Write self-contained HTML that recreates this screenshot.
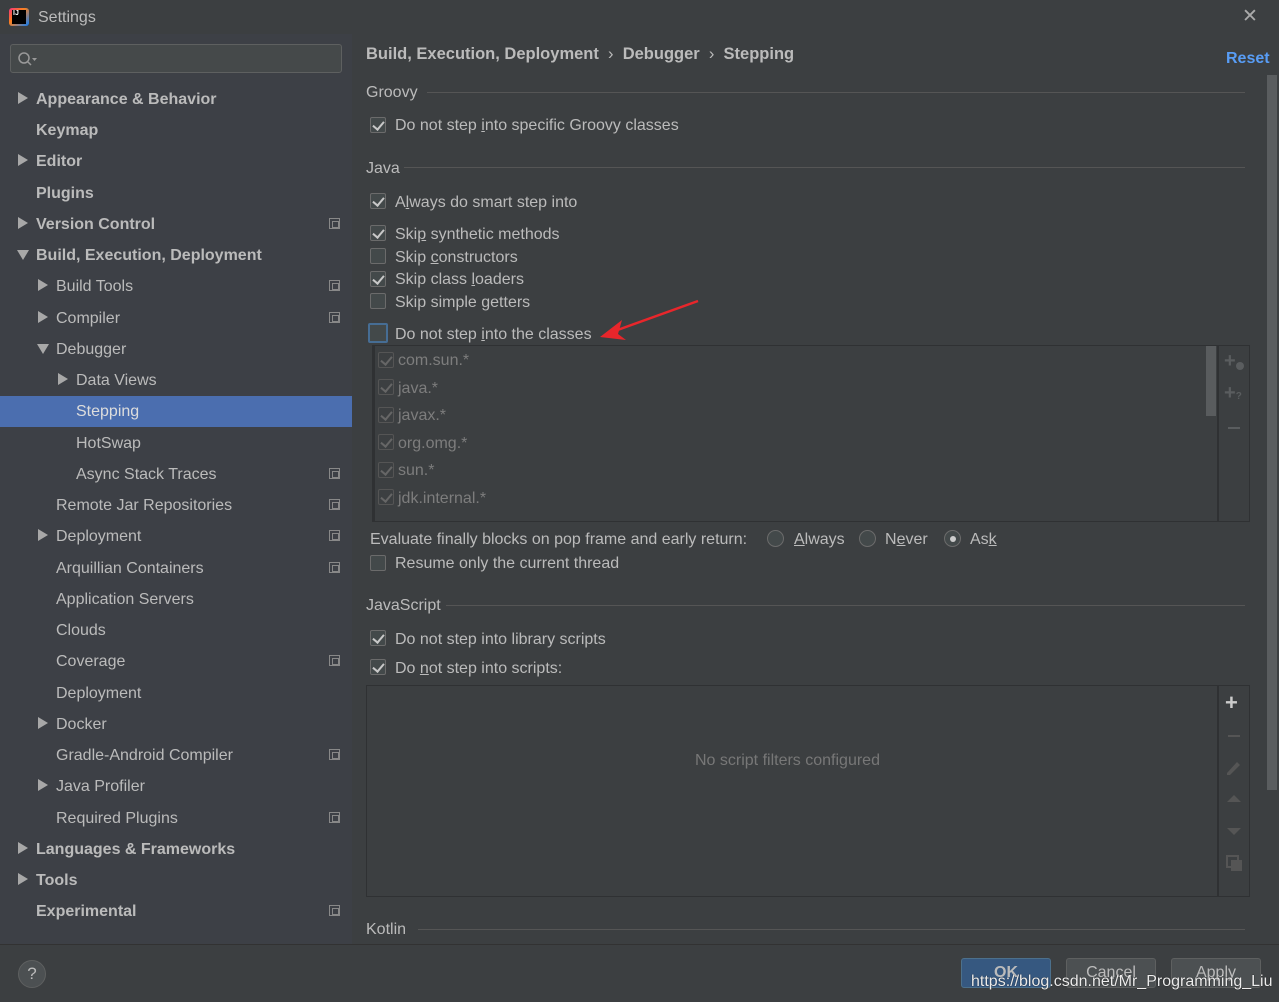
<!DOCTYPE html>
<html><head><meta charset="utf-8"><style>
*{margin:0;padding:0;box-sizing:border-box}
body{width:1279px;height:1002px;background:#3c3f41;font-family:"Liberation Sans",sans-serif;font-size:16px;color:#bbbbbb;position:relative;overflow:hidden}
.a{position:absolute;white-space:nowrap}
.side{position:absolute;left:0;top:34px;width:352px;height:910px;background:#3d4046}
.it{position:absolute;height:31px;line-height:31px;white-space:nowrap}
.b{font-weight:bold}
.tri{position:absolute;width:0;height:0;border-top:6px solid transparent;border-bottom:6px solid transparent;border-left:10px solid #a8a8a8}
.trid{position:absolute;width:0;height:0;border-left:6px solid transparent;border-right:6px solid transparent;border-top:10px solid #a8a8a8}
.pg{position:absolute;left:329px;width:11px;height:11px;border:1px solid #888;}
.pg:after{content:"";position:absolute;left:2px;top:2px;width:5px;height:5px;border:1px solid #888}
.cb{position:absolute;width:16px;height:16px;border:1px solid #6b6b6b;border-radius:2px;background:#43494a}
.cb.c:after{content:"";position:absolute;left:4px;top:1px;width:5px;height:9px;border-right:2px solid #c8c8c8;border-bottom:2px solid #c8c8c8;transform:rotate(40deg)}
.cb.d{border-color:#555;background:#3c3f41}
.cb.d:after{content:"";position:absolute;left:4px;top:1px;width:5px;height:9px;border-right:2px solid #666;border-bottom:2px solid #666;transform:rotate(40deg)}
.sep{position:absolute;height:1px;background:#555}
.rd{position:absolute;width:17px;height:17px;border:1px solid #6b6b6b;border-radius:50%;background:#43494a}
.btn{position:absolute;top:958px;height:30px;width:90px;border:1px solid #5e6060;border-radius:3px;background:#4c5052;text-align:center;line-height:28px}
</style></head><body>
<div class="a" style="left:9px;top:8px;width:20px;height:18px;background:linear-gradient(135deg,#f5317f,#fc801d 40%,#087cfa);border-radius:3px"></div>
<div class="a" style="left:12px;top:10px;width:14px;height:14px;background:#000;color:#fff;font-size:7px;font-weight:bold;line-height:8px;padding-left:1px">IJ</div>
<div class="a" style="left:38px;top:9px;font-size:16px;color:#bbb">Settings</div>
<div class="a" style="left:1242px;top:5px;font-size:19px;color:#aaa">✕</div>

<div class="side">
<div class="a" style="left:10px;top:10px;width:332px;height:29px;background:#45494a;border:1px solid #5e6060;border-radius:3px"></div>
<svg class="a" style="left:17px;top:17px" width="22" height="16"><circle cx="7" cy="7" r="5" fill="none" stroke="#999" stroke-width="1.5"/><line x1="11" y1="11" x2="14" y2="14" stroke="#999" stroke-width="1.5"/><path d="M15 7h5l-2.5 3z" fill="#999"/></svg>
<div class="a" style="left:0;top:362px;width:352px;height:31px;background:#4b6eaf"></div>
</div>
<!-- tree -->
<div class="tri" style="left:18px;top:92px"></div><div class="it b" style="left:36px;top:84px">Appearance &amp; Behavior</div>
<div class="it b" style="left:36px;top:115px">Keymap</div>
<div class="tri" style="left:18px;top:154px"></div><div class="it b" style="left:36px;top:146px">Editor</div>
<div class="it b" style="left:36px;top:178px">Plugins</div>
<div class="tri" style="left:18px;top:217px"></div><div class="it b" style="left:36px;top:209px">Version Control</div><div class="pg" style="top:218px"></div>
<div class="trid" style="left:17px;top:250px"></div><div class="it b" style="left:36px;top:240px">Build, Execution, Deployment</div>
<div class="tri" style="left:38px;top:279px"></div><div class="it" style="left:56px;top:271px">Build Tools</div><div class="pg" style="top:280px"></div>
<div class="tri" style="left:38px;top:311px"></div><div class="it" style="left:56px;top:303px">Compiler</div><div class="pg" style="top:312px"></div>
<div class="trid" style="left:37px;top:344px"></div><div class="it" style="left:56px;top:334px">Debugger</div>
<div class="tri" style="left:58px;top:373px"></div><div class="it" style="left:76px;top:365px">Data Views</div>
<div class="it" style="left:76px;top:396px;color:#ddd">Stepping</div>
<div class="it" style="left:76px;top:428px">HotSwap</div>
<div class="it" style="left:76px;top:459px">Async Stack Traces</div><div class="pg" style="top:468px"></div>
<div class="it" style="left:56px;top:490px">Remote Jar Repositories</div><div class="pg" style="top:499px"></div>
<div class="tri" style="left:38px;top:529px"></div><div class="it" style="left:56px;top:521px">Deployment</div><div class="pg" style="top:530px"></div>
<div class="it" style="left:56px;top:553px">Arquillian Containers</div><div class="pg" style="top:562px"></div>
<div class="it" style="left:56px;top:584px">Application Servers</div>
<div class="it" style="left:56px;top:615px">Clouds</div>
<div class="it" style="left:56px;top:646px">Coverage</div><div class="pg" style="top:655px"></div>
<div class="it" style="left:56px;top:678px">Deployment</div>
<div class="tri" style="left:38px;top:717px"></div><div class="it" style="left:56px;top:709px">Docker</div>
<div class="it" style="left:56px;top:740px">Gradle-Android Compiler</div><div class="pg" style="top:749px"></div>
<div class="tri" style="left:38px;top:779px"></div><div class="it" style="left:56px;top:771px">Java Profiler</div>
<div class="it" style="left:56px;top:803px">Required Plugins</div><div class="pg" style="top:812px"></div>
<div class="tri" style="left:18px;top:842px"></div><div class="it b" style="left:36px;top:834px">Languages &amp; Frameworks</div>
<div class="tri" style="left:18px;top:873px"></div><div class="it b" style="left:36px;top:865px">Tools</div>
<div class="it b" style="left:36px;top:896px">Experimental</div><div class="pg" style="top:905px"></div>

<!-- right -->
<div class="a b" style="left:366px;top:45px;font-size:16.5px">Build, Execution, Deployment &nbsp;<span style="font-weight:normal">›</span>&nbsp; Debugger &nbsp;<span style="font-weight:normal">›</span>&nbsp; Stepping</div>
<div class="a b" style="left:1226px;top:50px;color:#589df6">Reset</div>
<div class="a" style="left:1267px;top:75px;width:10px;height:715px;background:#5a5d5f"></div>

<div class="a" style="left:366px;top:84px">Groovy</div><div class="sep" style="left:427px;top:92px;width:818px"></div>
<div class="cb c" style="left:370px;top:117px"></div><div class="a" style="left:395px;top:117px">Do not step <u>i</u>nto specific Groovy classes</div>
<div class="a" style="left:366px;top:160px">Java</div><div class="sep" style="left:404px;top:167px;width:841px"></div>
<div class="cb c" style="left:370px;top:193px"></div><div class="a" style="left:395px;top:194px">A<u>l</u>ways do smart step into</div>
<div class="cb c" style="left:370px;top:225px"></div><div class="a" style="left:395px;top:226px">Ski<u>p</u> synthetic methods</div>
<div class="cb" style="left:370px;top:248px"></div><div class="a" style="left:395px;top:249px">Skip <u>c</u>onstructors</div>
<div class="cb c" style="left:370px;top:271px"></div><div class="a" style="left:395px;top:271px">Skip class <u>l</u>oaders</div>
<div class="cb" style="left:370px;top:293px"></div><div class="a" style="left:395px;top:294px">Skip simple getters</div>
<div class="cb" style="left:368px;top:323px;width:20px;height:20px;border:2px solid #466d94"></div><div class="a" style="left:395px;top:326px">Do not step <u>i</u>nto the classes</div>
<svg class="a" style="left:598px;top:298px" width="104" height="44"><line x1="100" y1="3" x2="14" y2="34" stroke="#e8262b" stroke-width="2.5"/><path d="M2 39 L24 22 L20 36 L28 42 Z" fill="#e8262b"/></svg>

<div class="a" style="left:372px;top:345px;width:878px;height:177px;border:1px solid #2f3133"></div>
<div class="a" style="left:372px;top:346px;width:3px;height:175px;background:#2f3133"></div>
<div class="a" style="left:1217px;top:345px;width:2px;height:177px;background:#2f3133"></div>
<div class="a" style="left:1206px;top:346px;width:10px;height:70px;background:#595c5e"></div>
<div class="a" style="left:1224px;top:350px;font-size:20px;color:#5a5d5f;font-weight:bold">+</div>
<div class="a" style="left:1236px;top:362px;width:8px;height:8px;border-radius:50%;background:#5a5d5f"></div>
<div class="a" style="left:1224px;top:382px;font-size:20px;color:#5a5d5f;font-weight:bold">+<span style="font-size:10px">?</span></div>
<div class="a" style="left:1228px;top:427px;width:12px;height:2px;background:#5a5d5f"></div>
<div class="cb d" style="left:378px;top:352px"></div><div class="a" style="left:398px;top:352px;color:#7d7d7d">com.sun.*</div>
<div class="cb d" style="left:378px;top:379px"></div><div class="a" style="left:398px;top:380px;color:#7d7d7d">java.*</div>
<div class="cb d" style="left:378px;top:407px"></div><div class="a" style="left:398px;top:407px;color:#7d7d7d">javax.*</div>
<div class="cb d" style="left:378px;top:434px"></div><div class="a" style="left:398px;top:435px;color:#7d7d7d">org.omg.*</div>
<div class="cb d" style="left:378px;top:462px"></div><div class="a" style="left:398px;top:462px;color:#7d7d7d">sun.*</div>
<div class="cb d" style="left:378px;top:489px"></div><div class="a" style="left:398px;top:490px;color:#7d7d7d">jdk.internal.*</div>

<div class="a" style="left:370px;top:531px">Evaluate finally blocks on pop frame and early return:</div>
<div class="rd" style="left:767px;top:530px"></div><div class="a" style="left:794px;top:531px"><u>A</u>lways</div>
<div class="rd" style="left:859px;top:530px"></div><div class="a" style="left:885px;top:531px">N<u>e</u>ver</div>
<div class="rd" style="left:944px;top:530px"></div><div class="a" style="left:950px;top:536px;width:6px;height:6px;border-radius:50%;background:#ccc"></div><div class="a" style="left:970px;top:531px">As<u>k</u></div>
<div class="cb" style="left:370px;top:555px"></div><div class="a" style="left:395px;top:555px">Resume only the current thread</div>

<div class="a" style="left:366px;top:597px">JavaScript</div><div class="sep" style="left:446px;top:605px;width:799px"></div>
<div class="cb c" style="left:370px;top:630px"></div><div class="a" style="left:395px;top:631px">Do not step into library scripts</div>
<div class="cb c" style="left:370px;top:659px"></div><div class="a" style="left:395px;top:660px">Do <u>n</u>ot step into scripts:</div>

<div class="a" style="left:366px;top:685px;width:884px;height:212px;border:1px solid #2f3133"></div>
<div class="a" style="left:1217px;top:685px;width:2px;height:212px;background:#2f3133"></div>
<div class="a" style="left:695px;top:752px;color:#777">No script filters configured</div>
<div class="a" style="left:1225px;top:690px;font-size:22px;color:#ccc;font-weight:bold">+</div>
<div class="a" style="left:1228px;top:735px;width:12px;height:2px;background:#555"></div>
<svg class="a" style="left:1225px;top:757px" width="20" height="20"><path d="M2 16 L12 5 L15 8 L5 18 L2 18Z" fill="#555"/></svg>
<svg class="a" style="left:1226px;top:794px" width="16" height="10"><path d="M1 8 L8 1 L15 8Z" fill="#555"/></svg>
<svg class="a" style="left:1226px;top:827px" width="16" height="10"><path d="M1 1 L8 8 L15 1Z" fill="#555"/></svg>
<svg class="a" style="left:1226px;top:855px" width="18" height="18"><rect x="1" y="1" width="11" height="11" fill="none" stroke="#555" stroke-width="2"/><rect x="5" y="5" width="11" height="11" fill="#555"/></svg>

<div class="a" style="left:366px;top:921px">Kotlin</div><div class="sep" style="left:418px;top:929px;width:827px"></div>

<div class="a" style="left:0;top:944px;width:1279px;height:58px;background:#3c3f41;border-top:1px solid #323232"></div>
<div class="a" style="left:18px;top:960px;width:28px;height:28px;border-radius:50%;background:#4c5052;border:1px solid #5e6060;text-align:center;line-height:26px;color:#bbb;font-size:17px">?</div>
<div class="btn" style="left:961px;background:#365880;border-color:#4c708c;font-weight:bold">OK</div>
<div class="btn" style="left:1066px">Cancel</div>
<div class="btn" style="left:1171px">Apply</div>
<div class="a" style="left:971px;top:973px;font-size:16px;color:#ececec;text-shadow:0 0 1px #000">https://blog.csdn.net/Mr_Programming_Liu</div>
</body></html>
